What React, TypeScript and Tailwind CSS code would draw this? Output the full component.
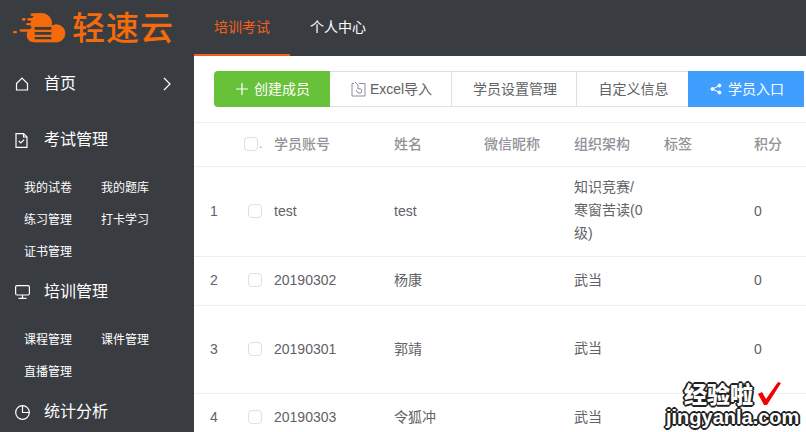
import React from 'react';

const cjk = "font-['Liberation_Sans','Noto_Sans_CJK_SC',sans-serif]";

const rows = [
  { no: '1', account: 'test', name: 'test', org: '知识竞赛/寒窗苦读(0级)', points: '0', height: 'h-[90px]' },
  { no: '2', account: '20190302', name: '杨康', org: '武当', points: '0', height: 'h-[49px]' },
  { no: '3', account: '20190301', name: '郭靖', org: '武当', points: '0', height: 'h-[88px]' },
  { no: '4', account: '20190303', name: '令狐冲', org: '武当', points: '', height: 'h-[49px]' },
];

const Logo = () => (
  <svg width="64" height="40" viewBox="0 0 192 120" className="shrink-0">
    <g fill="#f56a0a">
      <circle cx="145" cy="76" r="27" />
      <circle cx="100" cy="47" r="32" />
      <circle cx="78" cy="81" r="22" />
      <rect x="78" y="60" width="70" height="43" />
      <rect x="68" y="16" width="30" height="8" rx="4" />
      <rect x="58" y="30" width="30" height="8" rx="4" />
      <rect x="42" y="30" width="11" height="8" rx="4" />
      <rect x="55" y="45" width="30" height="7" rx="3" />
      <rect x="35" y="64" width="40" height="7" rx="3" />
      <rect x="15" y="69" width="12" height="7" rx="3" />
    </g>
    <path d="M80 57h50v8h-50zM80 72h50v8h-50zM80 87h50v7h-50z" fill="#393d42" />
  </svg>
);

const HomeIcon = () => (
  <svg width="14" height="14" viewBox="0 0 14 14" fill="none" stroke="white" strokeWidth="1.2">
    <path d="M1.500 6.500L7 1L12.500 6.500V13H1.500z" />
  </svg>
);

const FileIcon = () => (
  <svg width="13" height="15" viewBox="0 0 13 15" fill="none" stroke="white" strokeWidth="1.2">
    <path d="M1 .6h7.500L12 4V14.400H1z" />
    <path d="M8.500 .6V4H12" />
    <path d="M3.800 8l2 2 3.400-3.400" />
  </svg>
);

const MonitorIcon = () => (
  <svg width="15" height="14" viewBox="0 0 15 14" fill="none" stroke="white" strokeWidth="1.2">
    <rect x=".6" y=".6" width="13.800" height="9.400" rx="1.500" />
    <path d="M7.500 10v3.300M3.500 13.300h8" />
  </svg>
);

const PieIcon = () => (
  <svg width="15" height="15" viewBox="0 0 15 15" fill="none" stroke="white" strokeWidth="1.2">
    <circle cx="7.500" cy="7.500" r="6.800" />
    <path d="M7.500 .7V7.500H14.300" />
  </svg>
);

const NavHeading = ({ icon, label, chevron }: { icon: React.ReactNode; label: string; chevron?: boolean }) => (
  <div className="flex h-12 items-center text-white">
    <span className="flex w-[44px] pl-[15px]">{icon}</span>
    <span className="text-base leading-none">{label}</span>
    {chevron && (
      <svg width="8" height="14" viewBox="0 0 8 14" fill="none" stroke="white" strokeWidth="1.2" className="ml-[87px]">
        <path d="M1 1l6 6-6 6" />
      </svg>
    )}
  </div>
);

const SubMenu = ({ items }: { items: string[] }) => (
  <div className="grid grid-cols-[77px_77px] pl-6">
    {items.map((item) => (
      <div key={item} className="flex h-8 items-center text-xs text-white">
        {item}
      </div>
    ))}
  </div>
);

const Sidebar = () => (
  <aside className="w-[194px] shrink-0 overflow-hidden bg-[#393d42] pt-1">
    <NavHeading icon={<HomeIcon />} label="首页" chevron />
    <div className="mt-2 mb-2">
      <NavHeading icon={<FileIcon />} label="考试管理" />
    </div>
    <SubMenu items={['我的试卷', '我的题库', '练习管理', '打卡学习', '证书管理']} />
    <div className="mb-2">
      <NavHeading icon={<MonitorIcon />} label="培训管理" />
    </div>
    <SubMenu items={['课程管理', '课件管理', '直播管理']} />
    <NavHeading icon={<PieIcon />} label="统计分析" />
  </aside>
);

const Checkbox = () => (
  <span className="inline-block h-[14px] w-[14px] rounded-sm border border-[#dcdfe6] bg-white" />
);

const Toolbar = () => (
  <div className="flex h-9 text-sm">
    <button className="flex w-[116px] shrink-0 items-center justify-center gap-[6px] rounded-l bg-[#67c23a] pl-[2px] text-white">
      <svg width="12" height="12" viewBox="0 0 12 12" stroke="white" strokeWidth="1.2">
        <path d="M6 0v12M0 6h12" />
      </svg>
      创建成员
    </button>
    <button className="flex w-[122px] shrink-0 items-center justify-center gap-[4px] border-y border-r border-[#dcdfe6] pl-[2px] text-[#606266]">
      <svg width="15" height="16" viewBox="0 0 15 16" fill="none" stroke="#8a8f97" strokeWidth="1">
        <path d="M8 2.500H14V15H1V2.500H3" />
        <path d="M4 1l3 3v4l2-.5 2 1.500-1 3H7L5 9" />
      </svg>
      Excel导入
    </button>
    <button className="w-[125px] shrink-0 border-y border-r border-[#dcdfe6] pl-[2px] text-[#606266]">学员设置管理</button>
    <button className="w-[111px] shrink-0 border-y border-[#dcdfe6] pl-[2px] text-[#606266]">自定义信息</button>
    <button className="flex w-[116px] shrink-0 items-center justify-center gap-[6px] bg-[#409eff] pl-[2px] text-white">
      <svg width="12" height="12" viewBox="0 0 12 12" fill="white" stroke="white">
        <circle cx="2.500" cy="6" r="1.500" />
        <circle cx="9.500" cy="2.500" r="1.500" />
        <circle cx="9.500" cy="9.500" r="1.500" />
        <path d="M2.500 6L9.500 2.500M2.500 6L9.500 9.500" />
      </svg>
      学员入口
    </button>
  </div>
);

const TableHeader = () => (
  <div className="grid h-[45px] grid-cols-[80px_120px_90px_90px_90px_90px_1fr] items-center border-y border-[#ebeef5] pb-[2px] text-sm font-medium text-[#909399]">
    <div className="flex items-center pl-[50px]">
      <Checkbox />
      <span className="ml-[1px] text-xs">.</span>
    </div>
    <div>学员账号</div>
    <div>姓名</div>
    <div>微信昵称</div>
    <div>组织架构</div>
    <div>标签</div>
    <div>积分</div>
  </div>
);

const outline =
  '[text-shadow:-1px_-1px_0_#222,1px_-1px_0_#222,-1px_1px_0_#222,1px_1px_0_#222,0_-2px_0_#222,0_2px_0_#222,-2px_0_0_#222,2px_0_0_#222]';

const Watermark = () => (
  <div className={`absolute top-[380px] left-[666px] w-[130px] font-['Noto_Sans_CJK_SC',sans-serif] font-black text-white ${outline}`}>
    <div className="flex h-[27px] items-center pl-[18px] text-[23px] leading-[27px] whitespace-nowrap">
      经验啦
      <svg width="26" height="24" viewBox="0 0 26 24" fill="#f00000" className="ml-[4px]">
        <path d="M1 12l4-2 4 7L21 0l3 1L10 23H7z" />
      </svg>
    </div>
    <div className="font-['Liberation_Sans',sans-serif] text-[20px] leading-[20px] font-bold whitespace-nowrap">
      jingyanla.com
    </div>
  </div>
);

export default function App() {
  return (
    <div className={`relative flex h-[432px] w-[806px] flex-col overflow-hidden bg-white ${cjk}`}>
      <header className="flex h-[56px] shrink-0 bg-[#393d42]">
        <div className="flex w-[194px] items-center pl-2">
          <Logo />
          <span className="text-[33px] leading-none font-medium tracking-[1px] whitespace-nowrap text-[#f56a0a]">轻速云</span>
        </div>
        <div className="flex h-[56px] w-24 items-center justify-center border-b-2 border-[#f4601a] text-sm text-[#f4601a]">培训考试</div>
        <div className="ml-5 flex items-center pb-[2px] text-sm text-white">个人中心</div>
      </header>
      <div className="flex min-h-0 flex-1">
        <Sidebar />
        <main className="min-w-0 flex-1 overflow-hidden">
          <div className="pt-[15px] pb-[15px] pl-5">
            <Toolbar />
          </div>
          <TableHeader />
          {rows.map((row) => (
            <div
              key={row.no}
              className={`grid grid-cols-[80px_120px_90px_90px_90px_90px_1fr] items-center border-b border-[#ebeef5] pb-[2px] text-sm text-[#606266] ${row.height}`}
            >
              <div className="flex items-center pl-4">
                <span className="w-[38px]">{row.no}</span>
                <Checkbox />
              </div>
              <div>{row.account}</div>
              <div>{row.name}</div>
              <div />
              <div className="w-[72px] leading-[23px] break-all">{row.org}</div>
              <div />
              <div>{row.points}</div>
            </div>
          ))}
        </main>
      </div>
      <Watermark />
    </div>
  );
}
